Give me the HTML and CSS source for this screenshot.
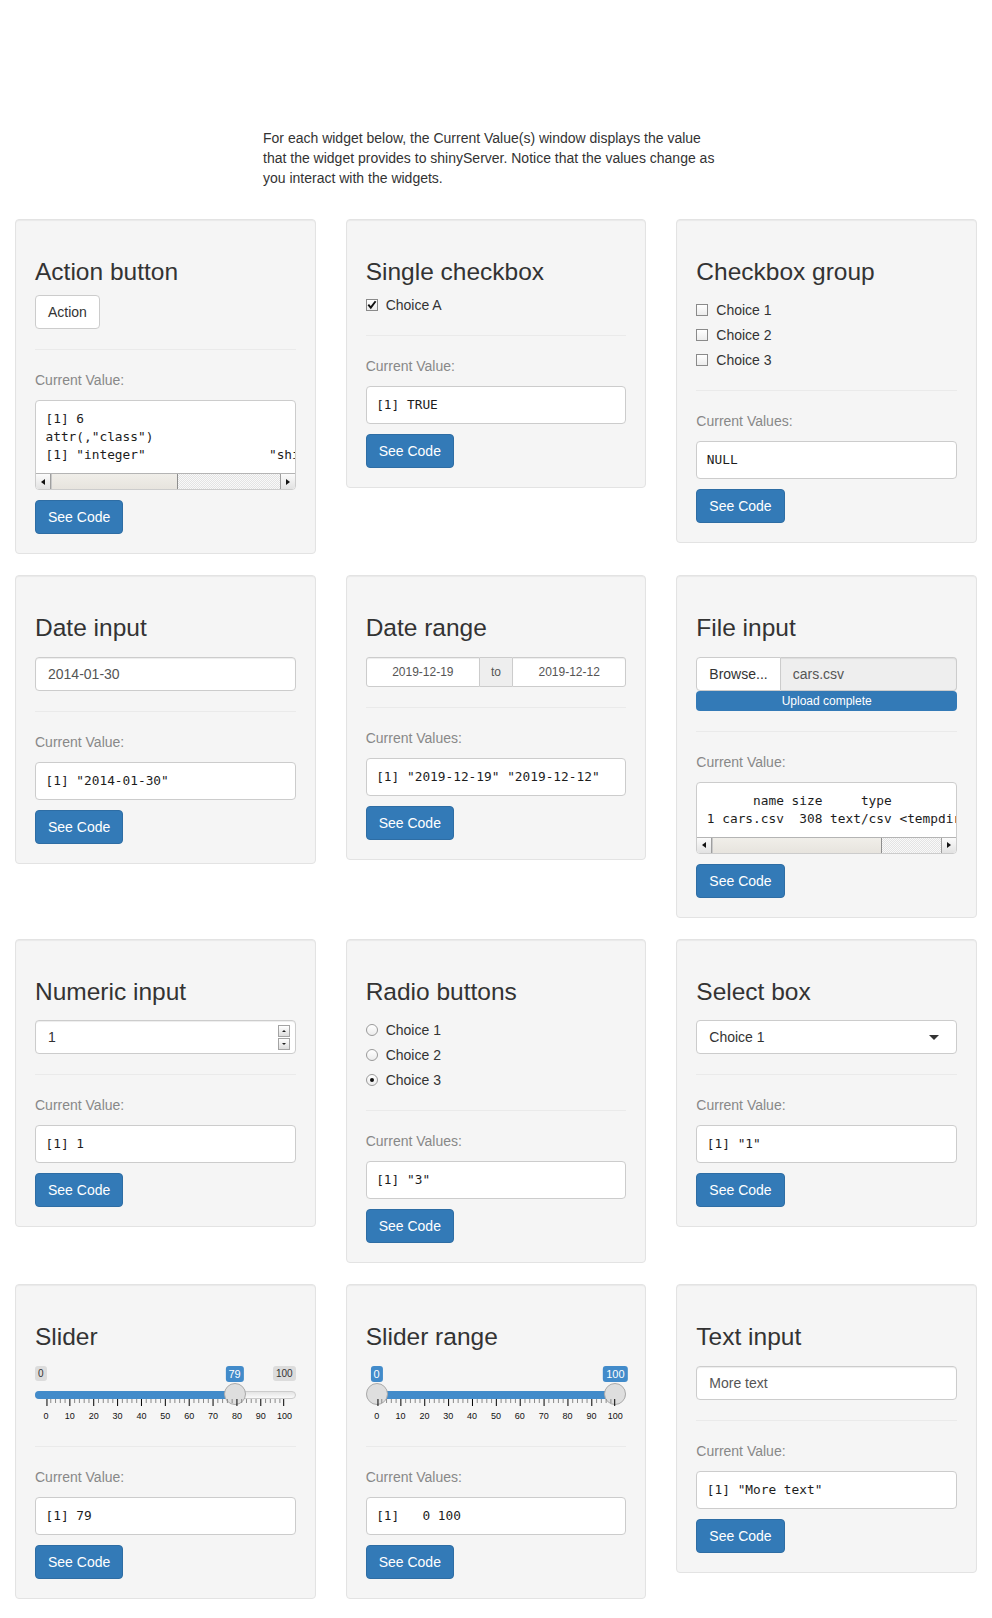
FILE: index.html
```html
<!DOCTYPE html>
<html>
<head>
<meta charset="utf-8">
<title>Widgets</title>
<link rel="stylesheet" href="styles.css">
</head>
<body>
<div class="intro">
  <p>For each widget below, the Current Value(s) window displays the value<br>that the widget provides to shinyServer. Notice that the values change as<br>you interact with the widgets.</p>
</div>

<div class="row">
  <div class="col">
    <div class="well">
      <h3>Action button</h3>
      <div class="btn btn-default">Action</div>
      <hr>
      <p class="cv">Current Value:</p>
      <div class="out">
        <pre>[1] 6
attr(,"class")
[1] "integer"                "shinyActionButtonValue"</pre>
        <div class="hscroll">
          <span class="sb-arrow sb-left"></span>
          <span class="sb-thumb thumb-action"></span>
          <span class="sb-track"></span>
          <span class="sb-arrow sb-right"></span>
        </div>
      </div>
      <div class="btn btn-primary">See Code</div>
    </div>
  </div>
  <div class="col">
    <div class="well">
      <h3>Single checkbox</h3>
      <div class="check"><span class="cbox"><svg viewBox="0 0 12 12" width="12" height="12"><path d="M2.3 5.6 L4.8 8.6 L9.6 2.2" fill="none" stroke="#111" stroke-width="1.9"/></svg></span>Choice A</div>
      <hr>
      <p class="cv">Current Value:</p>
      <div class="out"><pre>[1] TRUE</pre></div>
      <div class="btn btn-primary">See Code</div>
    </div>
  </div>
  <div class="col">
    <div class="well">
      <h3>Checkbox group</h3>
      <div class="group mt15">
        <div class="check"><span class="cbox"></span>Choice 1</div>
        <div class="check"><span class="cbox"></span>Choice 2</div>
        <div class="check"><span class="cbox"></span>Choice 3</div>
      </div>
      <hr>
      <p class="cv">Current Values:</p>
      <div class="out"><pre>NULL</pre></div>
      <div class="btn btn-primary">See Code</div>
    </div>
  </div>
</div>

<div class="row">
  <div class="col">
    <div class="well">
      <h3>Date input</h3>
      <div class="fc mt15">2014-01-30</div>
      <hr>
      <p class="cv">Current Value:</p>
      <div class="out"><pre>[1] "2014-01-30"</pre></div>
      <div class="btn btn-primary">See Code</div>
    </div>
  </div>
  <div class="col">
    <div class="well">
      <h3>Date range</h3>
      <div class="daterange mt15">
        <div class="dr-in dr-first">2019-12-19</div>
        <div class="dr-to">to</div>
        <div class="dr-in dr-last">2019-12-12</div>
      </div>
      <hr>
      <p class="cv">Current Values:</p>
      <div class="out"><pre>[1] "2019-12-19" "2019-12-12"</pre></div>
      <div class="btn btn-primary">See Code</div>
    </div>
  </div>
  <div class="col">
    <div class="well">
      <h3>File input</h3>
      <div class="file mt15">
        <div class="igroup">
          <div class="browse">Browse...</div>
          <div class="fname">cars.csv</div>
        </div>
        <div class="progress">Upload complete</div>
      </div>
      <hr>
      <p class="cv">Current Value:</p>
      <div class="out">
        <pre>      name size     type                                     datapath
1 cars.csv  308 text/csv &lt;tempdir&gt;/0.csv</pre>
        <div class="hscroll">
          <span class="sb-arrow sb-left"></span>
          <span class="sb-thumb thumb-file"></span>
          <span class="sb-track"></span>
          <span class="sb-arrow sb-right"></span>
        </div>
      </div>
      <div class="btn btn-primary">See Code</div>
    </div>
  </div>
</div>

<div class="row">
  <div class="col">
    <div class="well">
      <h3>Numeric input</h3>
      <div class="fc num mt15">
        <span>1</span>
        <span class="spin"><span class="sp sp-up"></span><span class="sp sp-dn"></span></span>
      </div>
      <hr>
      <p class="cv">Current Value:</p>
      <div class="out"><pre>[1] 1</pre></div>
      <div class="btn btn-primary">See Code</div>
    </div>
  </div>
  <div class="col">
    <div class="well">
      <h3>Radio buttons</h3>
      <div class="group mt15">
        <div class="check"><span class="rbox"></span>Choice 1</div>
        <div class="check"><span class="rbox"></span>Choice 2</div>
        <div class="check"><span class="rbox on"></span>Choice 3</div>
      </div>
      <hr>
      <p class="cv">Current Values:</p>
      <div class="out"><pre>[1] "3"</pre></div>
      <div class="btn btn-primary">See Code</div>
    </div>
  </div>
  <div class="col">
    <div class="well">
      <h3>Select box</h3>
      <div class="fc select mt15"><span>Choice 1</span><span class="caret"></span></div>
      <hr>
      <p class="cv">Current Value:</p>
      <div class="out"><pre>[1] "1"</pre></div>
      <div class="btn btn-primary">See Code</div>
    </div>
  </div>
</div>

<div class="row">
  <div class="col">
    <div class="well">
      <h3>Slider</h3>
      <div class="irs mt15">
        <span class="irs-line"></span>
        <span class="irs-bar bar-single"></span>
        <span class="irs-min">0</span>
        <span class="irs-max">100</span>
        <span class="irs-val at-79">79</span>
        <span class="irs-handle h-79"></span>
        <div class="irs-grid">
          <svg class="ticks" viewBox="0 0 100 8" preserveAspectRatio="none">
            <path class="minor" d="M2 0V4M4 0V4M6 0V4M8 0V4M12 0V4M14 0V4M16 0V4M18 0V4M22 0V4M24 0V4M26 0V4M28 0V4M32 0V4M34 0V4M36 0V4M38 0V4M42 0V4M44 0V4M46 0V4M48 0V4M52 0V4M54 0V4M56 0V4M58 0V4M62 0V4M64 0V4M66 0V4M68 0V4M72 0V4M74 0V4M76 0V4M78 0V4M82 0V4M84 0V4M86 0V4M88 0V4M92 0V4M94 0V4M96 0V4M98 0V4"/>
            <path class="major" d="M0.4 0V7M10 0V7M20 0V7M30 0V7M40 0V7M50 0V7M60 0V7M70 0V7M80 0V7M90 0V7M99.6 0V7"/>
          </svg>
          <div class="nums"><span>0</span><span>10</span><span>20</span><span>30</span><span>40</span><span>50</span><span>60</span><span>70</span><span>80</span><span>90</span><span>100</span></div>
        </div>
      </div>
      <hr>
      <p class="cv">Current Value:</p>
      <div class="out"><pre>[1] 79</pre></div>
      <div class="btn btn-primary">See Code</div>
    </div>
  </div>
  <div class="col">
    <div class="well">
      <h3>Slider range</h3>
      <div class="irs mt15">
        <span class="irs-line"></span>
        <span class="irs-bar bar-range"></span>
        <span class="irs-val at-0">0</span>
        <span class="irs-val at-100">100</span>
        <span class="irs-handle h-0"></span>
        <span class="irs-handle h-100"></span>
        <div class="irs-grid">
          <svg class="ticks" viewBox="0 0 100 8" preserveAspectRatio="none">
            <path class="minor" d="M2 0V4M4 0V4M6 0V4M8 0V4M12 0V4M14 0V4M16 0V4M18 0V4M22 0V4M24 0V4M26 0V4M28 0V4M32 0V4M34 0V4M36 0V4M38 0V4M42 0V4M44 0V4M46 0V4M48 0V4M52 0V4M54 0V4M56 0V4M58 0V4M62 0V4M64 0V4M66 0V4M68 0V4M72 0V4M74 0V4M76 0V4M78 0V4M82 0V4M84 0V4M86 0V4M88 0V4M92 0V4M94 0V4M96 0V4M98 0V4"/>
            <path class="major" d="M0.4 0V7M10 0V7M20 0V7M30 0V7M40 0V7M50 0V7M60 0V7M70 0V7M80 0V7M90 0V7M99.6 0V7"/>
          </svg>
          <div class="nums"><span>0</span><span>10</span><span>20</span><span>30</span><span>40</span><span>50</span><span>60</span><span>70</span><span>80</span><span>90</span><span>100</span></div>
        </div>
      </div>
      <hr>
      <p class="cv">Current Values:</p>
      <div class="out"><pre>[1]   0 100</pre></div>
      <div class="btn btn-primary">See Code</div>
    </div>
  </div>
  <div class="col">
    <div class="well">
      <h3>Text input</h3>
      <div class="fc mt15">More text</div>
      <hr>
      <p class="cv">Current Value:</p>
      <div class="out"><pre>[1] "More text"</pre></div>
      <div class="btn btn-primary">See Code</div>
    </div>
  </div>
</div>
</body>
</html>
```

FILE: styles.css
```css
* { box-sizing: border-box; }

body {
  margin: 0;
  background: #fff;
  color: #333;
  font-family: "Liberation Sans", Arial, Helvetica, sans-serif;
  font-size: 14px;
  line-height: 20px;
}

.intro {
  margin: 0 0 31px 25%;
  padding: 128px 15px 0;
}
.intro p { margin: 0; white-space: nowrap; }

.row {
  display: grid;
  grid-template-columns: repeat(3, 1fr);
  align-items: start;
}
.col { padding: 0 15px; min-width: 0; }

.well {
  background: #f5f5f5;
  border: 1px solid #e3e3e3;
  border-radius: 4px;
  box-shadow: inset 0 1px 1px rgba(0, 0, 0, .05);
  padding: 19px;
  margin-bottom: 21px;
}
.well h3 {
  margin: 20px 0 10px;
  font-size: 24.5px;
  font-weight: 400;
  line-height: 26.4px;
  color: #333;
}
.well hr {
  height: 0;
  margin: 20px 0;
  border: 0;
  border-top: 1px solid #eaeaea;
}
.mt15 { margin-top: 15px; }

.cv { margin: 0 0 10px; color: #888; }

/* buttons */
.btn {
  display: block;
  width: max-content;
  padding: 6px 12px;
  border: 1px solid transparent;
  border-radius: 4px;
  font-size: 14px;
  line-height: 20px;
  text-align: center;
}
.btn-default { background: #fff; border-color: #ccc; color: #333; }
.btn-primary { background: #337ab7; border-color: #2e6da4; color: #fff; }

/* output boxes */
.out {
  margin: 0 0 10px;
  background: #fff;
  border: 1px solid #ccc;
  border-radius: 4px;
  overflow: hidden;
}
.out pre {
  margin: 0;
  padding: 9px 9.5px;
  font-family: "DejaVu Sans Mono", "Liberation Mono", monospace;
  font-size: 12.8px;
  line-height: 18px;
  color: #1c1c1c;
  white-space: pre;
  overflow: hidden;
}

/* classic horizontal scrollbar */
.hscroll {
  display: flex;
  height: 16px;
  border-top: 1px solid #b4b4b4;
  background: #f2f2f2;
}
.sb-arrow {
  width: 15px;
  flex: none;
  display: flex;
  align-items: center;
  justify-content: center;
  background: linear-gradient(#fbfbfb, #e2e2e2);
}
.sb-left { border-right: 1px solid #9f9f9f; }
.sb-right { border-left: 1px solid #9f9f9f; }
.sb-left::after {
  content: "";
  border-style: solid;
  border-width: 3.5px 4px 3.5px 0;
  border-color: transparent #111 transparent transparent;
}
.sb-right::after {
  content: "";
  border-style: solid;
  border-width: 3.5px 0 3.5px 4px;
  border-color: transparent transparent transparent #111;
}
.sb-thumb {
  flex: none;
  background: linear-gradient(#f0eee9, #e7e4de);
  border-right: 1px solid #8e8e8e;
  border-left: 1px solid #c9c9c9;
}
.thumb-action { width: 127px; }
.thumb-file { width: 170px; }
.sb-track {
  flex: 1;
  background: repeating-conic-gradient(#e3e3e3 0 25%, #f9f9f9 0 50%) 0 0 / 2px 2px;
}

/* checkboxes and radios */
.check {
  display: flex;
  align-items: center;
  height: 20px;
}
.check + .check { margin-top: 5px; }
.cbox, .rbox {
  width: 12px;
  height: 12px;
  flex: none;
  margin-right: 8px;
  border: 1px solid #8a8a8a;
  background: linear-gradient(#ffffff, #ececec);
}
.cbox svg { display: block; margin: -1px; }
.rbox {
  border-radius: 50%;
  border-color: #9a9a9a;
  display: flex;
  align-items: center;
  justify-content: center;
}
.rbox.on::after {
  content: "";
  width: 4px;
  height: 4px;
  border-radius: 50%;
  background: #111;
}

/* form controls */
.fc {
  display: flex;
  align-items: center;
  height: 34px;
  padding: 6px 12px;
  background: #fff;
  border: 1px solid #ccc;
  border-radius: 4px;
  box-shadow: inset 0 1px 1px rgba(0, 0, 0, .075);
  color: #555;
}
.num { justify-content: space-between; padding-right: 5px; color: #333; }
.spin { display: flex; flex-direction: column; gap: 1px; }
.sp {
  width: 12px;
  height: 12px;
  border: 1px solid #a3a3a3;
  background: linear-gradient(#ffffff, #dcdcdc);
  display: flex;
  align-items: center;
  justify-content: center;
}
.sp-up::after {
  content: "";
  border-style: solid;
  border-width: 0 2px 2.5px;
  border-color: transparent transparent #222;
}
.sp-dn::after {
  content: "";
  border-style: solid;
  border-width: 2.5px 2px 0;
  border-color: #222 transparent transparent;
}

.select { justify-content: space-between; padding-right: 17px; color: #333; box-shadow: none; }
.caret {
  width: 0;
  height: 0;
  margin-top: 1px;
  border-style: solid;
  border-width: 5px 5px 0;
  border-color: #333 transparent transparent;
}

/* date range */
.daterange { display: flex; height: 30px; }
.dr-in {
  flex: 1;
  background: #fff;
  border: 1px solid #ccc;
  box-shadow: inset 0 1px 1px rgba(0, 0, 0, .075);
  font-size: 12px;
  line-height: 28px;
  text-align: center;
  color: #555;
}
.dr-first { border-radius: 3px 0 0 3px; }
.dr-last { border-radius: 0 3px 3px 0; }
.dr-to {
  flex: none;
  padding: 0 11px;
  background: #eee;
  border-top: 1px solid #ccc;
  border-bottom: 1px solid #ccc;
  font-size: 12px;
  line-height: 28px;
  color: #555;
}

/* file input */
.igroup { display: flex; height: 34px; }
.browse {
  flex: none;
  padding: 6px 12px;
  background: #fff;
  border: 1px solid #ccc;
  border-radius: 4px 0 0 4px;
  color: #333;
}
.fname {
  flex: 1;
  padding: 6px 12px;
  background: #eee;
  border: 1px solid #ccc;
  border-left: 0;
  border-radius: 0 4px 4px 0;
  box-shadow: inset 0 1px 1px rgba(0, 0, 0, .075);
  color: #555;
}
.progress {
  height: 20px;
  background: #337ab7;
  border-radius: 4px;
  color: #fff;
  font-size: 12px;
  line-height: 20px;
  text-align: center;
}

/* range slider */
.irs {
  position: relative;
  height: 60px;
}
.irs-line {
  position: absolute;
  left: 0;
  right: 0;
  top: 25px;
  height: 8px;
  border: 1px solid #ccc;
  border-radius: 16px;
  background: linear-gradient(#e4e4e4, #fafafa);
}
.irs-bar {
  position: absolute;
  top: 25px;
  height: 8px;
  background: #428bca;
}
.bar-single { left: 0; width: calc(11px + (100% - 22px) * .79); border-radius: 16px 0 0 16px; }
.bar-range { left: 11px; right: 11px; }
.irs-min, .irs-max {
  position: absolute;
  top: 0;
  padding: 1px 3px;
  font-size: 10px;
  line-height: 13px;
  color: #333;
  background: rgba(0, 0, 0, .1);
  border-radius: 3px;
}
.irs-min { left: 0; }
.irs-max { right: 0; }
.irs-val {
  position: absolute;
  top: 0;
  padding: 1px 3px;
  font-size: 11px;
  line-height: 14px;
  color: #fff;
  background: #428bca;
  border-radius: 3px;
  transform: translateX(-50%);
}
.at-79 { left: calc(11px + (100% - 22px) * .79); }
.at-0 { left: 11px; }
.at-100 { left: calc(100% - 11px); }
.irs-handle {
  position: absolute;
  top: 17px;
  width: 22px;
  height: 22px;
  border: 1px solid #aaa;
  border-radius: 50%;
  background: #dedede;
}
.h-79 { left: calc((100% - 22px) * .79); }
.h-0 { left: 0; }
.h-100 { right: 0; }
.irs-grid {
  position: absolute;
  left: 11px;
  right: 11px;
  top: 33px;
  height: 27px;
}
.ticks {
  display: block;
  width: 100%;
  height: 8px;
  overflow: visible;
}
.ticks path {
  fill: none;
  stroke: #000;
  stroke-width: 1;
  vector-effect: non-scaling-stroke;
}
.ticks .minor { stroke: #8a8a8a; }
.nums {
  display: flex;
  justify-content: space-between;
  margin-top: 5px;
}
.nums span {
  width: 0;
  display: flex;
  justify-content: center;
  font-size: 9px;
  line-height: 9px;
  color: #111;
  white-space: nowrap;
}
```
